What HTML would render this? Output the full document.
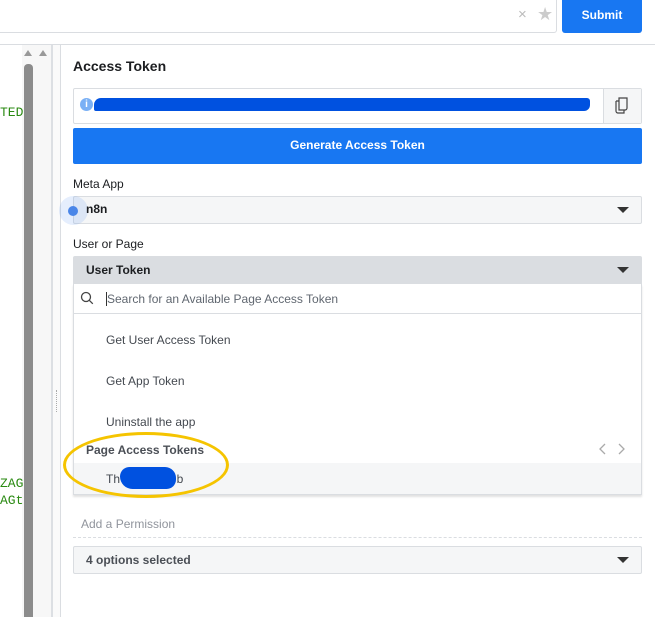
<!DOCTYPE html>
<html><head><style>
*{margin:0;padding:0;box-sizing:border-box}
body{width:662px;height:617px;position:relative;overflow:hidden;background:#fff;font-family:"Liberation Sans",Arial,sans-serif;}
.a{position:absolute}
.mono{font-family:"Liberation Mono",monospace;font-size:13px;color:#2a8a12}
.t{font-size:12px;color:#1c1e21}
</style></head><body>
<div class="a" style="left:0;top:0;width:557px;height:33px;border:1px solid #dadde1;border-top:none;border-left:none;border-radius:0 0 3px 0"></div>
<div class="a" style="left:518px;top:6px;font-size:15px;color:#bbb">×</div>
<div class="a" style="left:537px;top:4px;font-size:18px;color:#ccc">★</div>
<div class="a" style="left:562px;top:0;width:80px;height:33px;background:#1877f2;border-radius:0 0 3px 3px;color:#fff;font-weight:bold;font-size:12px;text-align:center;line-height:30px">Submit</div>
<div class="a" style="left:0;top:44px;width:655px;height:1px;background:#dadde1"></div>
<div class="a" style="left:22px;top:45px;width:31px;height:572px;background:#f7f7f7"></div>
<div class="a" style="left:24px;top:64px;width:9px;height:553px;background:#8c8c8c;border-radius:4px 4px 0 0"></div>
<div class="a" style="left:24px;top:50px;width:0;height:0;border-left:4.5px solid transparent;border-right:4.5px solid transparent;border-bottom:6px solid #999"></div>
<div class="a" style="left:39px;top:50px;width:0;height:0;border-left:4.5px solid transparent;border-right:4.5px solid transparent;border-bottom:6px solid #999"></div>
<div class="a" style="left:51px;top:45px;width:2px;height:572px;background:#dcdfe3"></div>
<div class="a" style="left:53px;top:45px;width:7px;height:572px;background:#fafafa"></div>
<div class="a" style="left:60px;top:45px;width:1px;height:572px;background:#dadde1"></div>
<div class="a" style="left:56px;top:390px;width:2px;height:22px;border-left:1px dotted #aaa"></div>
<div class="a mono" style="left:0;top:105px">TED</div>
<div class="a mono" style="left:0;top:476px">ZAG</div>
<div class="a mono" style="left:0;top:493px">AGt</div>
<div class="a" style="left:73px;top:58px;font-weight:bold;font-size:14px;color:#1c1e21">Access Token</div>
<div class="a" style="left:73px;top:88px;width:569px;height:36px;border:1px solid #dadde1;border-radius:2px"></div>
<div class="a" style="left:603px;top:89px;width:38px;height:34px;background:#f5f6f7;border-left:1px solid #dadde1"></div>
<svg class="a" style="left:612px;top:96px" width="20" height="20" viewBox="0 0 20 20"><path d="M7 2h8v10a2 2 0 0 1-2 2H7z M4 5h3M4 5v10a2 2 0 0 0 2 2h6v-3" fill="none" stroke="#444" stroke-width="1.2"/></svg>
<div class="a" style="left:80px;top:98px;width:13px;height:13px;border-radius:50%;background:#7ab0f5;color:#fff;font-size:10px;font-weight:bold;text-align:center;line-height:13px">i</div>
<div class="a" style="left:94px;top:98px;width:496px;height:13px;background:#0051e0;border-radius:7px 3px 6px 2px"></div>
<div class="a" style="left:73px;top:128px;width:569px;height:36px;background:#1877f2;border-radius:2px;color:#fff;font-weight:bold;font-size:12px;text-align:center;line-height:35px">Generate Access Token</div>
<div class="a t" style="left:73px;top:177px">Meta App</div>
<div class="a" style="left:73px;top:196px;width:569px;height:28px;background:#f5f6f7;border:1px solid #dadde1;border-radius:2px"></div>
<div class="a" style="left:59px;top:196px;width:29px;height:29px;border-radius:50%;background:rgba(80,140,240,.15)"></div>
<div class="a" style="left:68px;top:206px;width:10px;height:10px;border-radius:50%;background:#4a86e8"></div>
<div class="a" style="left:86px;top:202px;font-weight:bold;font-size:12px;color:#1c1e21">n8n</div>
<div class="a" style="left:617px;top:207px;border-left:6px solid transparent;border-right:6px solid transparent;border-top:6px solid #333"></div>
<div class="a t" style="left:73px;top:237px">User or Page</div>
<div class="a" style="left:73px;top:256px;width:569px;height:28px;background:#dadde1;border-radius:2px 2px 0 0"></div>
<div class="a" style="left:86px;top:263px;font-weight:bold;font-size:12px;color:#1c1e21">User Token</div>
<div class="a" style="left:617px;top:267px;border-left:6px solid transparent;border-right:6px solid transparent;border-top:6px solid #333"></div>
<div class="a" style="left:73px;top:284px;width:569px;height:211px;background:#fff;border:1px solid #dadde1;border-top:none;box-shadow:0 2px 2px rgba(0,0,0,.12)"></div>
<div class="a" style="left:73px;top:313px;width:569px;height:1px;background:#dadde1"></div>
<svg class="a" style="left:80px;top:291px" width="14" height="14" viewBox="0 0 14 14"><circle cx="6" cy="6" r="4.5" fill="none" stroke="#444" stroke-width="1.3"/><path d="M9.3 9.3l3.5 3.5" stroke="#444" stroke-width="1.3"/></svg>
<div class="a" style="left:106px;top:292px;width:1px;height:14px;background:#333"></div>
<div class="a t" style="left:107px;top:292px;color:#606770">Search for an Available Page Access Token</div>
<div class="a t" style="left:106px;top:333px;color:#444950">Get User Access Token</div>
<div class="a t" style="left:106px;top:374px;color:#444950">Get App Token</div>
<div class="a t" style="left:106px;top:415px;color:#444950">Uninstall the app</div>
<div class="a" style="left:86px;top:443px;font-weight:bold;font-size:12px;color:#4b4f56">Page Access Tokens</div>
<svg class="a" style="left:598px;top:442px" width="30" height="14" viewBox="0 0 30 14"><path d="M7 2L2 7l5 5M21 2l5 5-5 5" fill="none" stroke="#aaa" stroke-width="1.3"/></svg>
<div class="a" style="left:74px;top:463px;width:567px;height:31px;background:#f5f6f7"></div>
<div class="a t" style="left:106px;top:472px;color:#444950">Th&nbsp;&nbsp;&nbsp;&nbsp;&nbsp;&nbsp;&nbsp;&nbsp;&nbsp;&nbsp;&nbsp;&nbsp;&nbsp;&nbsp;&nbsp;&nbsp;&nbsp;b</div>
<div class="a" style="left:120px;top:467px;width:56px;height:22px;background:#0051e0;border-radius:12px 14px 12px 16px"></div>
<div class="a" style="left:63px;top:432px;width:166px;height:66px;border:3px solid #f5c400;border-radius:50%"></div>
<div class="a t" style="left:81px;top:517px;color:#90949c">Add a Permission</div>
<div class="a" style="left:73px;top:537px;width:569px;border-top:1px dashed #dadde1"></div>
<div class="a" style="left:73px;top:546px;width:569px;height:28px;background:#f5f6f7;border:1px solid #dadde1;border-radius:2px"></div>
<div class="a" style="left:86px;top:553px;font-weight:bold;font-size:12px;color:#4b4f56">4 options selected</div>
<div class="a" style="left:617px;top:557px;border-left:6px solid transparent;border-right:6px solid transparent;border-top:6px solid #333"></div>
</body></html>
